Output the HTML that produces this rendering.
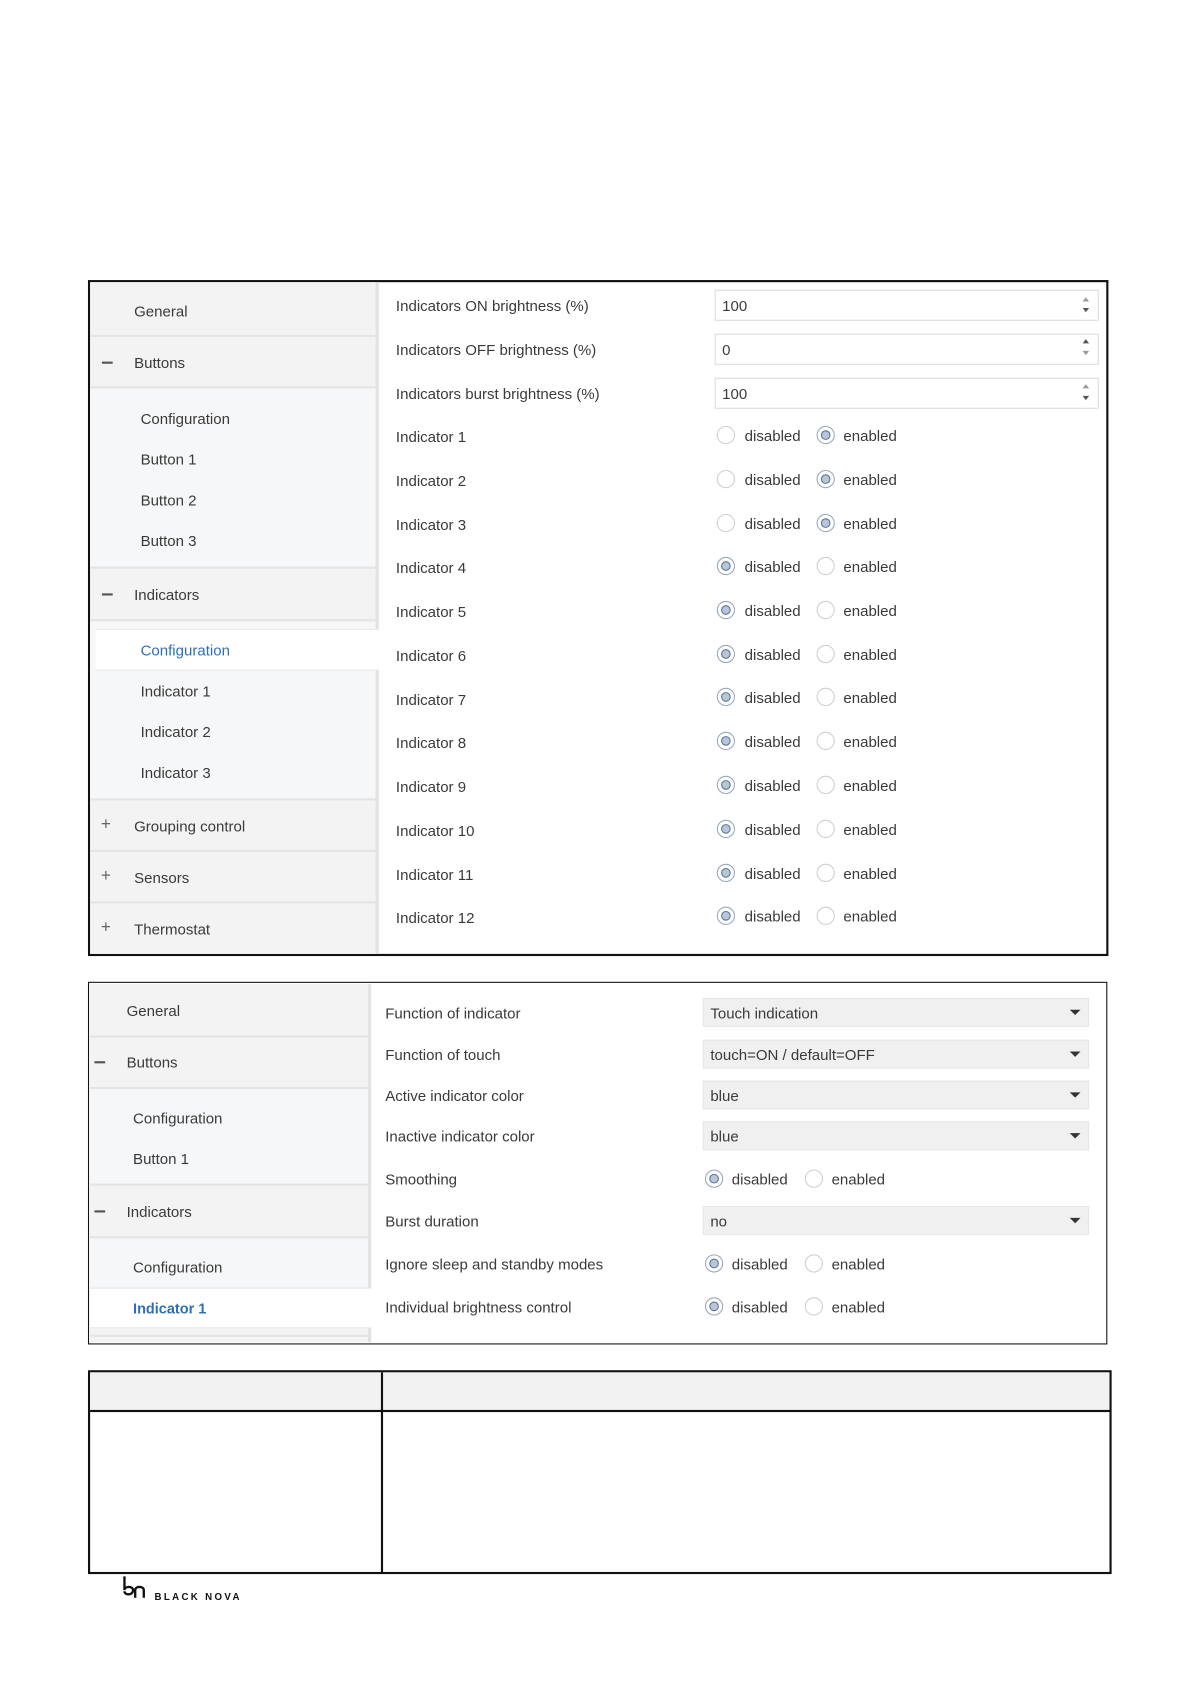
<!DOCTYPE html>
<html><head><meta charset="utf-8">
<style>
html,body{margin:0;padding:0;background:#fff;width:1191px;height:1684px;overflow:hidden}
#w{position:absolute;left:0;top:0;width:1110px;height:1570px;transform:scale(1.073);transform-origin:0 0;font-family:"Liberation Sans",sans-serif}
#w div{position:absolute;box-sizing:border-box}
.t{font-size:14px;line-height:16px;color:#3a3a3a;white-space:nowrap}
.sel{color:#2f6fb8}
.r{width:17px;height:17px;border:1px solid #cfcfcf;border-radius:50%;background:#fff}
.r.c{border-color:#9aa8bb}
.r.c::after{content:"";position:absolute;left:3px;top:3px;width:9px;height:9px;border-radius:50%;background:#b8c6da;border:1px solid #5b7394;box-sizing:border-box}
.in{border:1px solid #dcdcdc;background:#fff;height:29px}
.dd{background:#f0f0f0;border:1px solid #e6e6e6;height:27px}
.ar{width:0;height:0;border-left:5px solid transparent;border-right:5px solid transparent;border-top:5px solid #333}
.up{width:0;height:0;border-left:3px solid transparent;border-right:3px solid transparent;border-bottom:4px solid #999}
.dn{width:0;height:0;border-left:3px solid transparent;border-right:3px solid transparent;border-top:4px solid #555}
.hl{height:2px;background:#e4e4e4}
.minus{width:10px;height:2px;background:#555}
</style></head><body><div id="w">

<!-- PANEL 1 -->
<div style="left:82px;top:261px;width:951px;height:630px;border:2px solid #111;background:#fff"></div>
<div style="left:84px;top:263px;width:266px;height:626px;background:#f3f3f3"></div>
<div style="left:350px;top:263px;width:3px;height:626px;background:#e2e2e2"></div>
<div style="left:84px;top:362px;width:266px;height:166px;background:#f6f7f8"></div>
<div style="left:84px;top:579px;width:266px;height:166px;background:#f6f7f8"></div>
<div class="hl" style="left:84px;top:312px;width:266px"></div>
<div class="hl" style="left:84px;top:360px;width:266px"></div>
<div class="hl" style="left:84px;top:528px;width:266px"></div>
<div class="hl" style="left:84px;top:577px;width:266px"></div>
<div class="hl" style="left:84px;top:744px;width:266px"></div>
<div class="hl" style="left:84px;top:792px;width:266px"></div>
<div class="hl" style="left:84px;top:840px;width:266px"></div>
<div style="left:89px;top:586px;width:264px;height:39px;background:#fff;border-top:1px solid #e6e6e6;border-bottom:1px solid #e6e6e6"></div>
<div class="t" style="left:125px;top:282px">General</div>
<div class="minus" style="left:95px;top:337px"></div>
<div class="t" style="left:125px;top:330px">Buttons</div>
<div class="t" style="left:131px;top:382px">Configuration</div>
<div class="t" style="left:131px;top:420px">Button 1</div>
<div class="t" style="left:131px;top:458px">Button 2</div>
<div class="t" style="left:131px;top:496px">Button 3</div>
<div class="minus" style="left:95px;top:553px"></div>
<div class="t" style="left:125px;top:546px">Indicators</div>
<div class="t sel" style="left:131px;top:598px">Configuration</div>
<div class="t" style="left:131px;top:636px">Indicator 1</div>
<div class="t" style="left:131px;top:674px">Indicator 2</div>
<div class="t" style="left:131px;top:712px">Indicator 3</div>
<div class="t" style="left:94px;top:761px;color:#666;font-size:16px">+</div>
<div class="t" style="left:125px;top:762px">Grouping control</div>
<div class="t" style="left:94px;top:809px;color:#666;font-size:16px">+</div>
<div class="t" style="left:125px;top:810px">Sensors</div>
<div class="t" style="left:94px;top:857px;color:#666;font-size:16px">+</div>
<div class="t" style="left:125px;top:858px">Thermostat</div>

<div class="t" style="left:369px;top:277px">Indicators ON brightness (%)</div>
<div class="t" style="left:369px;top:318px">Indicators OFF brightness (%)</div>
<div class="t" style="left:369px;top:359px">Indicators burst brightness (%)</div>
<div class="in" style="left:666px;top:270px;width:358px"></div>
<div class="t" style="left:673px;top:277px">100</div>
<div class="up" style="left:1009px;top:277px"></div><div class="dn" style="left:1009px;top:287px"></div>
<div class="in" style="left:666px;top:311px;width:358px"></div>
<div class="t" style="left:673px;top:318px">0</div>
<div class="up" style="left:1009px;top:316px;border-bottom-color:#555"></div><div class="dn" style="left:1009px;top:327px;border-top-color:#999"></div>
<div class="in" style="left:666px;top:352px;width:358px"></div>
<div class="t" style="left:673px;top:359px">100</div>
<div class="up" style="left:1009px;top:358px"></div><div class="dn" style="left:1009px;top:369px"></div>

<div class="t" style="left:369px;top:399px">Indicator 1</div>
<div class="r" style="left:668px;top:397px"></div><div class="t" style="left:694px;top:398px">disabled</div>
<div class="r c" style="left:761px;top:397px"></div><div class="t" style="left:786px;top:398px">enabled</div>
<div class="t" style="left:369px;top:440px">Indicator 2</div>
<div class="r" style="left:668px;top:438px"></div><div class="t" style="left:694px;top:439px">disabled</div>
<div class="r c" style="left:761px;top:438px"></div><div class="t" style="left:786px;top:439px">enabled</div>
<div class="t" style="left:369px;top:481px">Indicator 3</div>
<div class="r" style="left:668px;top:479px"></div><div class="t" style="left:694px;top:480px">disabled</div>
<div class="r c" style="left:761px;top:479px"></div><div class="t" style="left:786px;top:480px">enabled</div>
<div class="t" style="left:369px;top:521px">Indicator 4</div>
<div class="r c" style="left:668px;top:519px"></div><div class="t" style="left:694px;top:520px">disabled</div>
<div class="r" style="left:761px;top:519px"></div><div class="t" style="left:786px;top:520px">enabled</div>
<div class="t" style="left:369px;top:562px">Indicator 5</div>
<div class="r c" style="left:668px;top:560px"></div><div class="t" style="left:694px;top:561px">disabled</div>
<div class="r" style="left:761px;top:560px"></div><div class="t" style="left:786px;top:561px">enabled</div>
<div class="t" style="left:369px;top:603px">Indicator 6</div>
<div class="r c" style="left:668px;top:601px"></div><div class="t" style="left:694px;top:602px">disabled</div>
<div class="r" style="left:761px;top:601px"></div><div class="t" style="left:786px;top:602px">enabled</div>
<div class="t" style="left:369px;top:644px">Indicator 7</div>
<div class="r c" style="left:668px;top:641px"></div><div class="t" style="left:694px;top:642px">disabled</div>
<div class="r" style="left:761px;top:641px"></div><div class="t" style="left:786px;top:642px">enabled</div>
<div class="t" style="left:369px;top:684px">Indicator 8</div>
<div class="r c" style="left:668px;top:682px"></div><div class="t" style="left:694px;top:683px">disabled</div>
<div class="r" style="left:761px;top:682px"></div><div class="t" style="left:786px;top:683px">enabled</div>
<div class="t" style="left:369px;top:725px">Indicator 9</div>
<div class="r c" style="left:668px;top:723px"></div><div class="t" style="left:694px;top:724px">disabled</div>
<div class="r" style="left:761px;top:723px"></div><div class="t" style="left:786px;top:724px">enabled</div>
<div class="t" style="left:369px;top:766px">Indicator 10</div>
<div class="r c" style="left:668px;top:764px"></div><div class="t" style="left:694px;top:765px">disabled</div>
<div class="r" style="left:761px;top:764px"></div><div class="t" style="left:786px;top:765px">enabled</div>
<div class="t" style="left:369px;top:807px">Indicator 11</div>
<div class="r c" style="left:668px;top:805px"></div><div class="t" style="left:694px;top:806px">disabled</div>
<div class="r" style="left:761px;top:805px"></div><div class="t" style="left:786px;top:806px">enabled</div>
<div class="t" style="left:369px;top:847px">Indicator 12</div>
<div class="r c" style="left:668px;top:845px"></div><div class="t" style="left:694px;top:846px">disabled</div>
<div class="r" style="left:761px;top:845px"></div><div class="t" style="left:786px;top:846px">enabled</div>

<!-- PANEL 2 -->
<div style="left:82px;top:915px;width:950px;height:338px;border:1.5px solid #111;background:#fff"></div>
<div style="left:84px;top:917px;width:259px;height:334px;background:#f3f3f3"></div>
<div style="left:343px;top:917px;width:3px;height:334px;background:#e2e2e2"></div>
<div style="left:84px;top:1015px;width:259px;height:88px;background:#f6f7f8"></div>
<div style="left:84px;top:1155px;width:259px;height:44px;background:#f6f7f8"></div>
<div class="hl" style="left:84px;top:965px;width:259px"></div>
<div class="hl" style="left:84px;top:1013px;width:259px"></div>
<div class="hl" style="left:84px;top:1103px;width:259px"></div>
<div class="hl" style="left:84px;top:1152px;width:259px"></div>
<div class="hl" style="left:84px;top:1244px;width:259px"></div>
<div style="left:84px;top:1200px;width:262px;height:38px;background:#fff;border-top:1px solid #e6e6e6;border-bottom:1px solid #e6e6e6"></div>
<div class="t" style="left:118px;top:934px">General</div>
<div class="minus" style="left:88px;top:989px"></div>
<div class="t" style="left:118px;top:982px">Buttons</div>
<div class="t" style="left:124px;top:1034px">Configuration</div>
<div class="t" style="left:124px;top:1072px">Button 1</div>
<div class="minus" style="left:88px;top:1128px"></div>
<div class="t" style="left:118px;top:1121px">Indicators</div>
<div class="t" style="left:124px;top:1173px">Configuration</div>
<div class="t sel" style="left:124px;top:1212px;font-weight:bold;font-size:13.5px">Indicator 1</div>

<div class="t" style="left:359px;top:936px">Function of indicator</div>
<div class="t" style="left:359px;top:975px">Function of touch</div>
<div class="t" style="left:359px;top:1013px">Active indicator color</div>
<div class="t" style="left:359px;top:1051px">Inactive indicator color</div>
<div class="t" style="left:359px;top:1091px">Smoothing</div>
<div class="t" style="left:359px;top:1130px">Burst duration</div>
<div class="t" style="left:359px;top:1170px">Ignore sleep and standby modes</div>
<div class="t" style="left:359px;top:1210px">Individual brightness control</div>

<div class="dd" style="left:655px;top:930px;width:360px"></div><div class="t" style="left:662px;top:936px">Touch indication</div><div class="ar" style="left:997px;top:941px"></div>
<div class="dd" style="left:655px;top:969px;width:360px"></div><div class="t" style="left:662px;top:975px">touch=ON / default=OFF</div><div class="ar" style="left:997px;top:980px"></div>
<div class="dd" style="left:655px;top:1007px;width:360px"></div><div class="t" style="left:662px;top:1013px">blue</div><div class="ar" style="left:997px;top:1018px"></div>
<div class="dd" style="left:655px;top:1045px;width:360px"></div><div class="t" style="left:662px;top:1051px">blue</div><div class="ar" style="left:997px;top:1056px"></div>
<div class="dd" style="left:655px;top:1124px;width:360px"></div><div class="t" style="left:662px;top:1130px">no</div><div class="ar" style="left:997px;top:1135px"></div>

<div class="r c" style="left:657px;top:1090px"></div><div class="t" style="left:682px;top:1091px">disabled</div>
<div class="r" style="left:750px;top:1090px"></div><div class="t" style="left:775px;top:1091px">enabled</div>
<div class="r c" style="left:657px;top:1169px"></div><div class="t" style="left:682px;top:1170px">disabled</div>
<div class="r" style="left:750px;top:1169px"></div><div class="t" style="left:775px;top:1170px">enabled</div>
<div class="r c" style="left:657px;top:1209px"></div><div class="t" style="left:682px;top:1210px">disabled</div>
<div class="r" style="left:750px;top:1209px"></div><div class="t" style="left:775px;top:1210px">enabled</div>

<!-- TABLE -->
<div style="left:82px;top:1277px;width:954px;height:190px;border:2px solid #111;background:#fff"></div>
<div style="left:84px;top:1279px;width:950px;height:36px;background:#f2f2f2"></div>
<div style="left:84px;top:1314px;width:950px;height:2px;background:#111"></div>
<div style="left:355px;top:1279px;width:1.5px;height:186px;background:#111"></div>

<!-- LOGO -->
<svg style="position:absolute;left:114px;top:1469px" width="24" height="22" viewBox="0 0 24 22">
<path d="M2 0 V13 M2 13 C2 9 10 9 10 13 C10 18 2 18 2 14 M12 20 V13 C12 9 20 9 20 13 V20" fill="none" stroke="#111" stroke-width="2.2"/>
</svg>
<div class="t" style="left:144px;top:1480px;font-size:9px;letter-spacing:2.2px;color:#111;font-weight:bold">BLACK NOVA</div>

</div></body></html>
